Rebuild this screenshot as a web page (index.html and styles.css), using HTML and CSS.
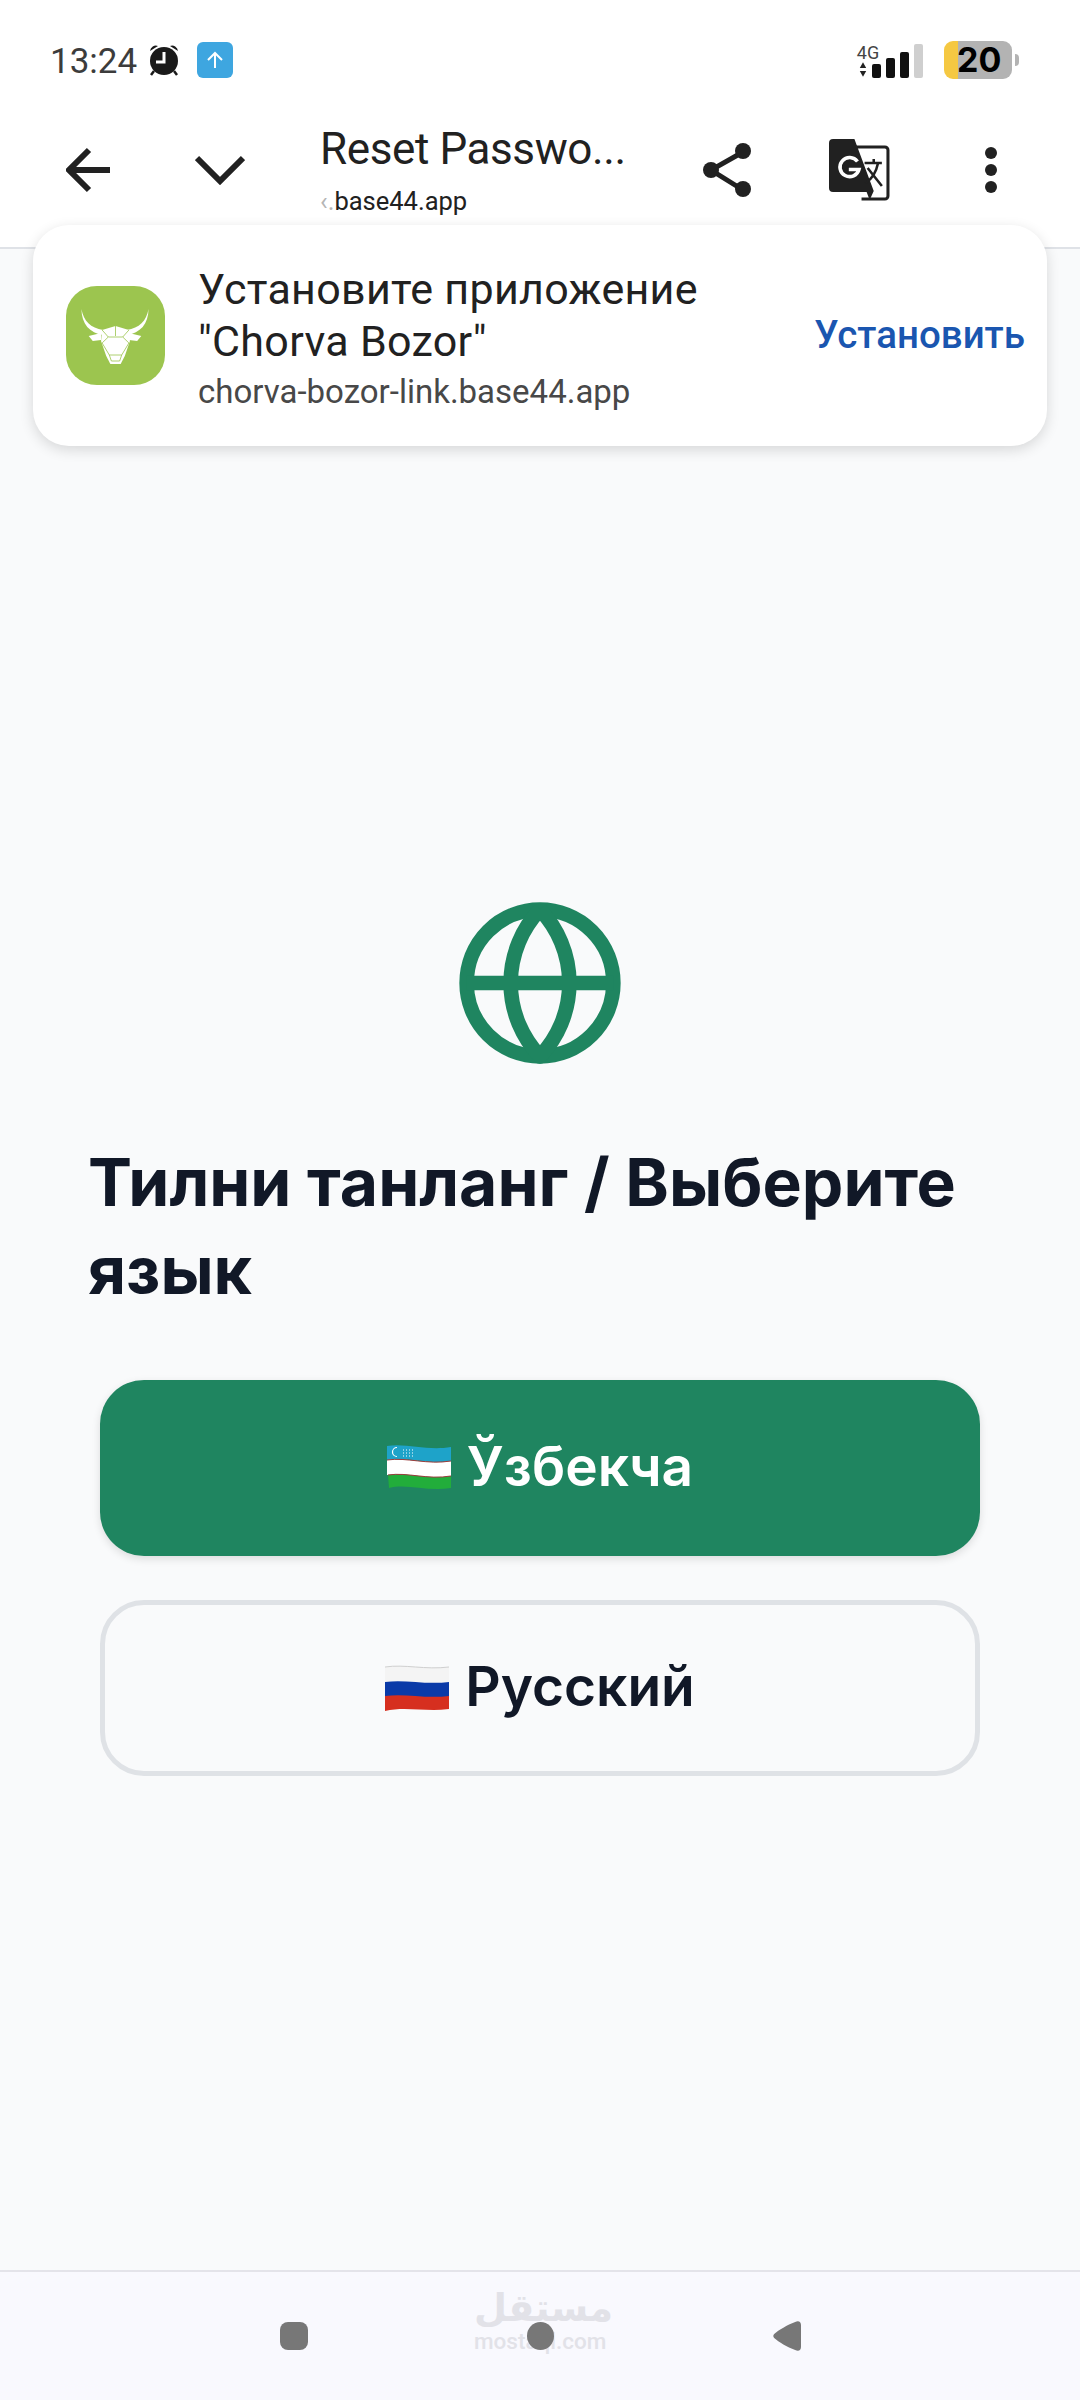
FILE: index.html
```html
<!DOCTYPE html>
<html lang="en">
  <head>
    <meta charset="utf-8">
    <title>Reset Password</title>
    <link rel="stylesheet" href="styles.css">
  </head>
  <body>
    <div class="status">
      <span class="time">13:24</span>
      <svg class="alarm" viewBox="0 0 32 34">
        <circle cx="16" cy="18" r="14" fill="#1a1a1a"/>
        <path d="M2 8a6 6 0 0 1 8-5zM30 8a6 6 0 0 0-8-5z" fill="#1a1a1a"/>
        <path d="M6 28l-3 4M26 28l3 4" stroke="#1a1a1a" stroke-width="2.5"/>
        <path d="M16 9v10H8" fill="none" stroke="#fff" stroke-width="3"/>
      </svg>
      <svg class="upload" viewBox="0 0 36 36">
        <rect width="36" height="36" rx="6" fill="#3ea6e0"/>
        <path d="M18 26V11M11 18l7-7 7 7" fill="none" stroke="#fff" stroke-width="2"/>
      </svg>
      <div class="status-right">
        <div class="net">
          <span class="net-label">4G</span>
          <svg class="net-arrows" viewBox="0 0 10 18">
            <path d="M5 0l4 7H1zM5 18l4-7H1z" fill="#222"/>
          </svg>
        </div>
        <div class="bars">
          <span class="bar bar-1"></span>
          <span class="bar bar-2"></span>
          <span class="bar bar-3"></span>
          <span class="bar bar-4"></span>
        </div>
        <div class="battery">20</div>
        <span class="battery-nub"></span>
      </div>
    </div>

    <div class="toolbar">
      <div class="tool">
        <svg width="44" height="46" viewBox="0 0 44 46">
          <path d="M44 23H4M23 3L3 23l20 20" fill="none" stroke="#212121" stroke-width="6"/>
        </svg>
      </div>
      <div class="tool">
        <svg width="50" height="30" viewBox="0 0 50 30">
          <path d="M2 3l23 23L48 3" fill="none" stroke="#212121" stroke-width="6"/>
        </svg>
      </div>
      <div class="page-title">
        <div class="page-name">Reset Passwo...</div>
        <div class="page-url"><span class="url-fade">‹.</span>base44.app</div>
      </div>
      <div class="tool">
        <svg width="50" height="56" viewBox="0 0 50 56">
          <path d="M41 10L9 28l32 20" fill="none" stroke="#212121" stroke-width="5"/>
          <circle cx="41" cy="9" r="8" fill="#212121"/>
          <circle cx="9" cy="28" r="8" fill="#212121"/>
          <circle cx="41" cy="47" r="8" fill="#212121"/>
        </svg>
      </div>
      <div class="tool">
        <svg width="61" height="62" viewBox="0 0 60 62" preserveAspectRatio="none">
          <path d="M26 8h29a3 3 0 0 1 3 3v46a3 3 0 0 1-3 3H32" fill="#fff" stroke="#212121" stroke-width="3"/>
          <path d="M4 0h21l19 52-4 9-3-8H4a4 4 0 0 1-4-4V4a4 4 0 0 1 4-4z" fill="#212121"/>
          <path d="M28 22.500a9.500 9.500 0 1 0 1.500 8H19.500" fill="none" stroke="#fff" stroke-width="3.500"/>
          <path d="M35 24h17M44 20v5M48 25c-2 10-6 15-12 19M38 29l14 18" fill="none" stroke="#212121" stroke-width="2.500"/>
        </svg>
      </div>
      <div class="tool">
        <svg width="12" height="46" viewBox="0 0 12 46">
          <circle cx="6" cy="6" r="6" fill="#212121"/>
          <circle cx="6" cy="23" r="6" fill="#212121"/>
          <circle cx="6" cy="40" r="6" fill="#212121"/>
        </svg>
      </div>
    </div>

    <div class="install-card">
      <svg class="app-icon" viewBox="0 0 96 99" preserveAspectRatio="none">
        <rect width="96" height="99" rx="30" fill="#9cc54f"/>
        <path d="M15 23c2 12 9 19 21 21v5c-13-2-21-11-21-26zM80 23c-2 12-9 19-21 21v5c13-2 21-11 21-26z" fill="#fff"/>
        <path d="M22 50l12-3v7l-8 1zM73 50l-12-3v7l8 1z" fill="#fff"/>
        <path d="M35 44l13-4 13 4 1 11-5 15-4 8H43l-4-8-5-15z" fill="#fff"/>
        <path d="M48 40v10M35 44l6 7h14l6-7M41 51l-6 6 7 12h12l7-12-6-6M42 69l2 6h8l2-6" fill="none" stroke="#9cc54f" stroke-width="0.800"/>
      </svg>
      <div class="install-text">
        <div class="install-title">Установите приложение<br>"Chorva Bozor"</div>
        <div class="install-url">chorva-bozor-link.base44.app</div>
      </div>
      <div class="install-btn">Установить</div>
    </div>

    <main class="content">
      <svg class="globe" viewBox="0 0 24 24">
        <circle cx="12" cy="12" r="10"/>
        <path d="M12 2a14.500 14.500 0 0 0 0 20 14.500 14.500 0 0 0 0-20"/>
        <path d="M2 12h20"/>
      </svg>
      <h1>Тилни танланг / Выберите язык</h1>
      <div class="lang-btn lang-active">
        <svg class="flag" viewBox="0 0 64 46">
          <path d="M0 1c20-3 40 5 64 1v14c-24 4-44-5-64-1z" fill="#1ea3c9"/>
          <path d="M0 15c20-3 40 5 64 1v15c-24 4-44-4-64-1z" fill="#fff"/>
          <path d="M1 30c20-3 39 5 63 1v12c-24 4-44-5-62 0z" fill="#22ad3b"/>
          <path d="M0 15c20-3 40 5 64 1M1 30c20-3 39 5 63 1" fill="none" stroke="#9b3b3b" stroke-width="1"/>
          <path d="M10 2.500a4.500 4.500 0 0 0 0 9" fill="none" stroke="#fff" stroke-width="1.200"/>
          <path d="M16 8h11M16 5h11M16 11h11" fill="none" stroke="#fff" stroke-width="1" stroke-dasharray="1 2"/>
        </svg>
        <span class="lang-name">Ўзбекча</span>
      </div>
      <div class="lang-btn lang-plain">
        <svg class="flag" viewBox="0 0 64 46">
          <path d="M0 2c20-3 40 3 64 0v15c-24 3-44-3-64 0z" fill="#f4f4f4"/>
          <path d="M0 17c20-3 40 3 64 0v15c-24 3-44-3-64 0z" fill="#0a3aa8"/>
          <path d="M0 31c20-3 40 3 64 0v13c-24 3-44-3-64 2z" fill="#d62f1f"/>
          <path d="M0 2c20-3 40 3 64 0" fill="none" stroke="#cfcfcf" stroke-width="1"/>
        </svg>
        <span class="lang-name">Русский</span>
      </div>
    </main>

    <div class="navbar">
      <div class="watermark">
        <div class="watermark-ar">مستقل</div>
        <div class="watermark-en">mostaql.com</div>
      </div>
      <span class="nav-square"></span>
      <span class="nav-circle"></span>
      <svg class="nav-back" viewBox="0 0 24 30" preserveAspectRatio="none">
        <path d="M19 1c3-2 5 0 5 3 0 7 0 15 0 22 0 3-2 5-5 3C12 26 5 21 1 17c-1-1-1-3 0-4 4-4 11-9 18-12z" fill="#777"/>
      </svg>
    </div>
  </body>
</html>
```

FILE: styles.css
```css
* {
  box-sizing: border-box;
}

html,
body {
  margin: 0;
  height: 100%;
}

body {
  position: relative;
  width: 1080px;
  height: 2400px;
  display: flex;
  flex-direction: column;
  overflow: hidden;
  font-family: Roboto, sans-serif;
  background-color: #f9fafb;
  color: #212121;
}

/* status bar */
.status {
  height: 92px;
  padding: 28px 61px 0 50px;
  display: flex;
  align-items: center;
  background: white;
}

.time {
  font-size: 35px;
  margin-top: 3px;
  color: #3c3c3c;
}

.alarm {
  width: 32px;
  height: 34px;
  margin-left: 11px;
}

.upload {
  width: 36px;
  height: 36px;
  margin-left: 17px;
}

.status-right {
  margin-left: auto;
  display: flex;
  align-items: flex-end;
  height: 38px;
}

.net {
  width: 24px;
  height: 34px;
  margin-bottom: 1px;
  display: flex;
  flex-direction: column;
  align-items: center;
  margin-right: -8px;
}

.net-label {
  font-size: 18px;
  line-height: 17px;
  color: #444;
}

.net-arrows {
  width: 8px;
  height: 17px;
  margin-right: 10px;
}

.bars {
  display: flex;
  align-items: flex-end;
  gap: 5px;
  height: 34px;
  margin-bottom: 1px;
}

.bar {
  width: 9px;
  border-radius: 2px;
  background: #111;
}

.bar-1 {
  height: 14px;
}

.bar-2 {
  height: 20px;
}

.bar-3 {
  height: 26px;
}

.bar-4 {
  height: 34px;
  background: #cfcfcf;
}

.battery {
  width: 68px;
  height: 38px;
  margin-left: 21px;
  border-radius: 9px;
  background: linear-gradient(to right, #f5c842 14px, #b3b3b3 14px);
  color: #000;
  font-family: Inter, sans-serif;
  font-weight: 700;
  font-size: 34px;
  line-height: 38px;
  padding-left: 13px;
}

.battery-nub {
  width: 4px;
  height: 12px;
  margin: 0 0 13px 3px;
  border-radius: 0 4px 4px 0;
  background: #b3b3b3;
}

/* browser toolbar */
.toolbar {
  height: 157px;
  padding-left: 22px;
  display: flex;
  align-items: center;
  background: white;
  border-bottom: 2px solid #dfe2e7;
}

.tool {
  width: 132px;
  display: flex;
  justify-content: center;
  align-items: center;
}

.page-title {
  width: 341px;
  margin-left: 34px;
}

.page-name {
  font-size: 44px;
  line-height: 52px;
  letter-spacing: -0.4px;
}

.page-url {
  font-size: 25.500px;
  line-height: 32px;
  margin-top: 10px;
}

.url-fade {
  color: #b5b5b5;
}

/* install prompt */
.install-card {
  position: absolute;
  left: 33px;
  top: 225px;
  width: 1014px;
  height: 221px;
  padding-left: 33px;
  display: flex;
  align-items: center;
  background: white;
  border-radius: 36px;
  box-shadow: 0 4px 14px rgba(0, 0, 0, 0.14);
}

.app-icon {
  width: 99px;
  height: 99px;
  flex-shrink: 0;
}

.install-text {
  margin: 6px 0 0 33px;
}

.install-title {
  font-size: 43px;
  line-height: 52px;
  letter-spacing: 0.3px;
}

.install-url {
  font-size: 33px;
  line-height: 44px;
  color: #484848;
  margin-top: 3px;
}

.install-btn {
  position: absolute;
  right: 22px;
  top: 88px;
  font-size: 38.500px;
  font-weight: 500;
  line-height: 44px;
  color: #1a56b0;
}

/* language picker */
.content {
  flex: 1;
  padding: 646px 88px 0;
  display: flex;
  flex-direction: column;
}

.globe {
  width: 176px;
  height: 176px;
  align-self: center;
  flex-shrink: 0;
  fill: none;
  stroke: #1f8560;
  stroke-width: 2;
  stroke-linejoin: round;
}

h1 {
  margin: 67px 0 66px;
  font-family: Inter, sans-serif;
  font-size: 66px;
  font-weight: 700;
  line-height: 88px;
  color: #111827;
}

.lang-btn {
  width: 880px;
  margin-left: 12px;
  flex-shrink: 0;
  display: flex;
  justify-content: center;
  align-items: center;
  gap: 16px;
  font-family: Inter, sans-serif;
  font-size: 55px;
  font-weight: 600;
  border-radius: 44px;
}

.lang-name {
  margin-bottom: 5px;
}

.lang-active {
  height: 176px;
  margin-bottom: 44px;
  background: #1f8560;
  color: white;
  box-shadow: 0 3px 8px rgba(0, 0, 0, 0.12);
}

.lang-plain {
  height: 176px;
  border: 5px solid #dfe2e6;
  color: #111827;
}

.flag {
  width: 64px;
  height: 46px;
}

/* nav bar */
.navbar {
  position: relative;
  height: 130px;
  display: flex;
  justify-content: center;
  align-items: center;
  gap: 219px;
  background: #f9f9fe;
  border-top: 2px solid #e4e4ea;
}

.nav-square {
  position: relative;
  width: 28px;
  height: 28px;
  border-radius: 8px;
  background: #777;
}

.nav-circle {
  position: relative;
  width: 27px;
  height: 28px;
  border-radius: 50%;
  background: #777;
}

.nav-back {
  position: relative;
  width: 28px;
  height: 30px;
}

.watermark {
  position: absolute;
  left: 474px;
  top: 14px;
  width: 132px;
  color: #e2e2e8;
  text-align: center;
}

.watermark-ar {
  font-family: "DejaVu Sans", sans-serif;
  font-weight: 700;
  font-size: 38px;
  line-height: 44px;
}

.watermark-en {
  font-family: Roboto, sans-serif;
  font-weight: 500;
  font-size: 22.500px;
  line-height: 22px;
}
```
